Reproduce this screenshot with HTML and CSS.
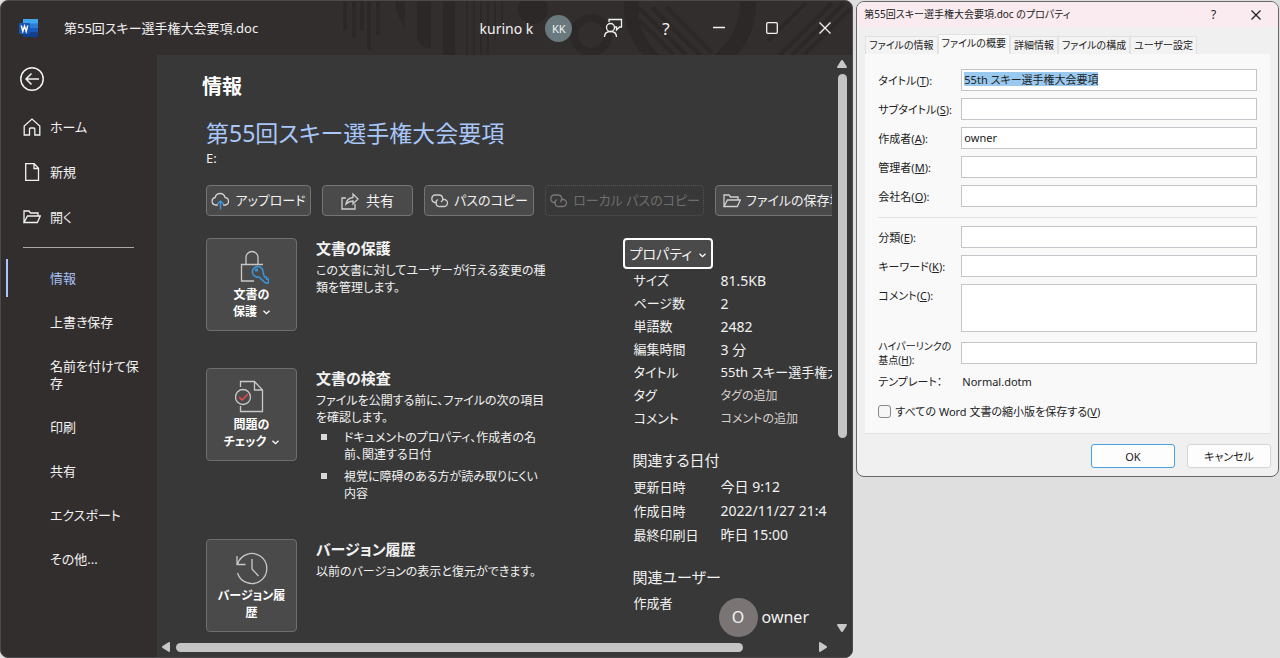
FILE: index.html
```html
<!DOCTYPE html>
<html lang="ja">
<head>
<meta charset="utf-8">
<title>第55回スキー選手権大会要項.doc</title>
<link rel="stylesheet" href="styles.css">
</head>
<body>
<div class="desktop">
  <div class="window">
    <header class="titlebar">
      <svg class="pattern" width="512" height="54" viewBox="340 0 512 54" aria-hidden="true">
        <g fill="#2c2828">
          <path d="M343 0h4v30h-4zM352 0h4v37h-4zM360 0h4v30h-4zM367 0h4v48h-4zM376 0h4v34h-4zM395 0h10v28q-8-12-10-28zM417 0h14v48q-14-4-14-10zM443 0h12v54h-12zM466 0h2v54h-2zM473 0h2v54h-2zM480 0h2v54h-2zM487 0h2v54h-2zM494 0h2v40h-2zM501 0h2v30h-2z"/>
          <circle cx="533" cy="8" r="15"/>
          <path d="M624 0h14q-2 34 22 54h-16q-22-22-20-54zM740 0h16q0 34-20 54h-22q26-20 26-54z"/>
        </g>
        <g fill="none" stroke="#2c2828">
          <circle cx="591" cy="34" r="17" stroke-width="8"/>
          <path stroke-width="4" d="M638 6l48 48M640 20l34 34M652 6l48 48M666 6l46 46M780 54l52-52M792 54l52-52M804 54l46-46M768 40l38-38"/>
        </g>
      </svg>
      <svg class="word-logo" width="19" height="18" viewBox="0 0 19 18" role="img" aria-label="Word">
        <rect x="4" width="15" height="5" fill="#41a5ee"/><rect x="4" y="4.500" width="15" height="4.500" fill="#2b7cd3"/><rect x="4" y="9" width="15" height="4.500" fill="#185abd"/><rect x="4" y="13.500" width="15" height="4.500" fill="#103f91"/>
        <rect y="4" width="11" height="11" rx="1" fill="#1955b4"/>
        <path d="M2.300 6.500l1.500 6L5.500 7l1.700 5.500 1.500-6" fill="none" stroke="#fff" stroke-width="1.400"/>
      </svg>
      <span class="file-name">第55回スキー選手権大会要項.doc</span>
      <span class="user-name">kurino k</span>
      <span class="user-avatar">KK</span>
      <div class="window-buttons">
        <button aria-label="フィードバック"><svg width="20" height="20" viewBox="0 0 20 20"><circle cx="7.500" cy="9.500" r="4"/><path d="M1.500 19q0-5.500 6-5.500t6 5.500M6 4V1.500h12.500V9H16.500l-3 3V9H12"/></svg></button>
        <button aria-label="ヘルプ" class="help">?</button>
        <button aria-label="最小化"><svg width="12" height="12" viewBox="0 0 12 12"><path d="M0 5.500h12"/></svg></button>
        <button aria-label="最大化"><svg width="12" height="12" viewBox="0 0 12 12"><rect x=".7" y=".7" width="10.600" height="10.600" rx="1"/></svg></button>
        <button aria-label="閉じる"><svg width="12" height="12" viewBox="0 0 12 12"><path d="M.5.5l11 11M11.500.5l-11 11"/></svg></button>
      </div>
    </header>

    <nav class="sidebar">
      <button class="back" aria-label="戻る"><svg width="24" height="24" viewBox="0 0 24 24"><circle cx="12" cy="12" r="11.200"/><path d="M19 12H6.500M11.500 6.500L6 12l5.500 5.500"/></svg></button>
      <a class="nav-item" href="#"><svg width="18" height="18" viewBox="0 0 18 18"><path d="M1.200 17V8L9 1l7.800 7v9h-5v-6q0-1-1-1H7.500q-1 0-1 1v6z"/></svg><span>ホーム</span></a>
      <a class="nav-item" href="#"><svg width="18" height="18" viewBox="0 0 18 18"><path d="M2.700.7h8.500l4.300 4.500v12.100H2.700zM11 .7v4.800h4.500"/></svg><span>新規</span></a>
      <a class="nav-item" href="#"><svg width="18" height="18" viewBox="0 0 18 18"><path d="M1 14.500V3h5l1.500 2H15v3M1 14.500L4.500 8H17.300l-3 6.500z"/></svg><span>開く</span></a>
      <hr>
      <a class="nav-item current" href="#"><span>情報</span></a>
      <a class="nav-item" href="#"><span>上書き保存</span></a>
      <a class="nav-item" href="#"><span>名前を付けて保<br>存</span></a>
      <a class="nav-item" href="#"><span>印刷</span></a>
      <a class="nav-item" href="#"><span>共有</span></a>
      <a class="nav-item" href="#"><span>エクスポート</span></a>
      <a class="nav-item" href="#"><span>その他...</span></a>
    </nav>

    <main class="pane">
      <h1>情報</h1>
      <div class="pane-body">
        <h2 class="doc-title">第55回スキー選手権大会要項</h2>
        <p class="doc-path">E:</p>
        <div class="actions">
          <button class="w-upload"><svg width="19" height="18" viewBox="0 0 19 18"><path d="M7 13H4.500a3.800 3.800 0 0 1-.3-7.500 5 5 0 0 1 9.800 0 3.800 3.800 0 0 1 .5 7.500H12"/><path class="blue" d="M9.500 17.500V9M6.500 12l3-3 3 3"/></svg>アップロード</button>
          <button class="w-share"><svg width="18" height="18" viewBox="0 0 18 18"><path d="M5 6H1v11h13v-5M5 12q1-6 7-6.500V2l5 5-5 5V9q-4 0-7 3z"/></svg>共有</button>
          <button class="w-path"><svg width="19" height="18" viewBox="0 0 19 18"><path d="M7 10.500H5a3.800 3.800 0 0 1 0-7.500h4a3.800 3.800 0 0 1 2 7M12 7.500h2a3.300 3.300 0 0 1 0 7h-4a3.700 3.700 0 0 1-2-7"/></svg>パスのコピー</button>
          <button class="w-local" disabled><svg width="19" height="18" viewBox="0 0 19 18"><path d="M7 10.500H5a3.800 3.800 0 0 1 0-7.500h4a3.800 3.800 0 0 1 2 7M12 7.500h2a3.300 3.300 0 0 1 0 7h-4a3.700 3.700 0 0 1-2-7"/></svg>ローカル パスのコピー</button>
          <button class="w-folder"><svg width="18" height="18" viewBox="0 0 18 18"><path d="M1 14.500V3h5l1.500 2H15v3M1 14.500L4.500 8H17.300l-3 6.500z"/></svg>ファイルの保存場所を開く</button>
        </div>
        <div class="columns">
          <div class="sections">
            <section>
              <button class="tile"><svg width="34" height="34" viewBox="0 0 34 34"><path d="M28 14.500H6.500V31H19M11 14V7.500a6 6 0 0 1 12 0V14"/><path class="blue" d="M28 22.500a5.300 5.300 0 1 0-4 4.500l6.500 6h3v-4l-2 0v-2h-2z"/><circle class="blue" cx="21.500" cy="20" r="1"/></svg><span>文書の<br>保護 <svg class="chev" width="7" height="5" viewBox="0 0 7 5"><path d="M.5.7l3 3 3-3"/></svg></span></button>
              <div class="about"><h3>文書の保護</h3><p>この文書に対してユーザーが行える変更の種<br>類を管理します。</p></div>
            </section>
            <section>
              <button class="tile"><svg width="34" height="34" viewBox="0 0 34 34"><path d="M5.500 7V1.500h14l8 8.500v21.500h-22V26M19.500 1.500V10h8"/><circle cx="8" cy="17" r="7.500"/><path class="red" d="M4 17l3 3 6-6"/></svg><span>問題の<br>チェック <svg class="chev" width="7" height="5" viewBox="0 0 7 5"><path d="M.5.7l3 3 3-3"/></svg></span></button>
              <div class="about"><h3>文書の検査</h3><p>ファイルを公開する前に、ファイルの次の項目<br>を確認します。</p>
                <ul><li>ドキュメントのプロパティ、作成者の名<br>前、関連する日付</li><li>視覚に障碍のある方が読み取りにくい<br>内容</li></ul></div>
            </section>
            <section>
              <button class="tile"><svg width="34" height="34" viewBox="0 0 34 34"><path d="M2 5v8.500h8.500M2.500 13a15 15 0 1 1 0 9M17 8v10l6.500 7"/></svg><span>バージョン履<br>歴</span></button>
              <div class="about"><h3>バージョン履歴</h3><p>以前のバージョンの表示と復元ができます。</p></div>
            </section>
          </div>
          <aside class="details">
            <button class="prop-button">プロパティ <svg class="chev" width="7" height="5" viewBox="0 0 7 5"><path d="M.5.7l3 3 3-3"/></svg></button>
            <dl>
              <dt>サイズ</dt><dd>81.5KB</dd>
              <dt>ページ数</dt><dd>2</dd>
              <dt>単語数</dt><dd>2482</dd>
              <dt>編集時間</dt><dd>3 分</dd>
              <dt>タイトル</dt><dd class="text">55th スキー選手権大会要項</dd>
              <dt>タグ</dt><dd class="dim">タグの追加</dd>
              <dt>コメント</dt><dd class="dim">コメントの追加</dd>
            </dl>
            <h4>関連する日付</h4>
            <dl class="dates">
              <dt>更新日時</dt><dd>今日 9:12</dd>
              <dt>作成日時</dt><dd>2022/11/27 21:4</dd>
              <dt>最終印刷日</dt><dd>昨日 15:00</dd>
            </dl>
            <h4>関連ユーザー</h4>
            <dl class="people">
              <dt>作成者</dt><dd><span class="owner-avatar">O</span>owner</dd>
            </dl>
          </aside>
        </div>
      </div>
    </main>
    <div class="vscroll" aria-hidden="true">
      <svg width="10" height="8" viewBox="0 0 10 8"><path d="M5 0q.8 0 1.300 1L10 7q0 1-1 1H1Q0 8 0 7l3.700-6Q4.200 0 5 0z"/></svg>
      <div class="vtrack"><div class="vthumb"></div></div>
      <svg width="10" height="8" viewBox="0 0 10 8"><path d="M5 8q.8 0 1.300-1L10 1q0-1-1-1H1Q0 0 0 1l3.700 6Q4.200 8 5 8z"/></svg>
    </div>
    <div class="hscroll" aria-hidden="true">
      <svg width="8" height="10" viewBox="0 0 8 10"><path d="M0 5q0-.8 1-1.300L7 0q1 0 1 1v8q0 1-1 1L1 6.300Q0 5.800 0 5z"/></svg>
      <div class="htrack"><div class="hthumb"></div></div>
      <svg width="8" height="10" viewBox="0 0 8 10"><path d="M8 5q0-.8-1-1.300L1 0Q0 0 0 1v8q0 1 1 1l6-3.700Q8 5.800 8 5z"/></svg>
    </div>
  </div>

  <div class="side">
    <form class="dialog">
      <header class="dialog-title">
        <span>第55回スキー選手権大会要項.doc のプロパティ</span>
        <button type="button" aria-label="ヘルプ">?</button>
        <button type="button" aria-label="閉じる"><svg width="10" height="10" viewBox="0 0 10 10"><path d="M.5.5l9 9M9.500.5l-9 9"/></svg></button>
      </header>
      <div class="tabs">
        <button type="button">ファイルの情報</button><button type="button" class="active">ファイルの概要</button><button type="button">詳細情報</button><button type="button">ファイルの構成</button><button type="button">ユーザー設定</button>
      </div>
      <div class="tab-panel">
        <div class="fields">
          <label for="f1">タイトル(<u>T</u>):</label><input id="f1" class="selected" value="55th スキー選手権大会要項">
          <label for="f2">サブタイトル(<u>S</u>):</label><input id="f2">
          <label for="f3">作成者(<u>A</u>):</label><input id="f3" value="owner">
          <label for="f4">管理者(<u>M</u>):</label><input id="f4">
          <label for="f5">会社名(<u>O</u>):</label><input id="f5">
        </div>
        <hr>
        <div class="fields">
          <label for="f6">分類(<u>E</u>):</label><input id="f6">
          <label for="f7">キーワード(<u>K</u>):</label><input id="f7">
          <label for="f8" class="top">コメント(<u>C</u>):</label><textarea id="f8"></textarea>
          <label for="f9" class="two-line">ハイパーリンクの<br>基点(<u>H</u>):</label><input id="f9">
        </div>
        <div class="template"><span>テンプレート：</span><span>Normal.dotm</span></div>
        <label class="check"><input type="checkbox"><span>すべての Word 文書の縮小版を保存する(<u>V</u>)</span></label>
      </div>
      <div class="dialog-actions">
        <button type="button" class="primary">OK</button>
        <button type="button">キャンセル</button>
      </div>
    </form>
  </div>
</div>
</body>
</html>
```
FILE: styles.css
```css
* { box-sizing: border-box; }
body {
  margin: 0;
  font: 13px/17px "Noto Sans", "Noto Sans CJK JP", sans-serif;
  font-feature-settings: "palt";
  color: #f2f2f2;
  background: #dfdfdf;
}
h1, h2, h3, h4, p, ul, dl, dd { margin: 0; padding: 0; }
button, input, textarea { font: inherit; font-feature-settings: inherit; color: inherit; }
button { padding: 0; border: 0; background: none; }
svg { flex: none; fill: none; stroke: currentColor; stroke-width: 1.300; }
.blue { stroke: #3a96dd; stroke-width: 1.500; }
.red { stroke: #e8484d; stroke-width: 1.600; }

.desktop { display: grid; grid-template: 100vh / 2fr 1fr; }

/* Word window */
.window {
  display: grid;
  grid-template: 54px minmax(0, 1fr) 20px / 156px minmax(0, 1fr) 20px;
  border: 1px solid #4c4a4a;
  border-radius: 8px;
  background: #322e2e;
  overflow: hidden;
}
.titlebar {
  grid-column: 1 / -1;
  position: relative;
  display: flex;
  align-items: center;
  padding: 0 1px 0 18px;
}
.pattern { position: absolute; top: 0; right: 0; stroke: none; }
.titlebar > :not(.pattern) { position: relative; }
.word-logo { stroke: none; }
.file-name { margin-left: 26px; margin-right: auto; }
.user-name { font-size: 14px; }
.user-avatar {
  display: grid; place-items: center;
  width: 27px; height: 27px; margin-left: 12px;
  border-radius: 50%; background: #69797e; font-size: 11px;
}
.window-buttons { display: flex; margin-left: 14px; }
.window-buttons button { display: grid; place-items: center; width: 53px; height: 32px; }
.window-buttons .help { font-size: 17px; }

.sidebar { grid-row: 2 / 4; padding-top: 12px; display: flex; flex-direction: column; }
.back { align-self: flex-start; margin: 0 0 14px 19px; height: 24px; }
.back svg { display: block; stroke-width: 1.500; }
.nav-item {
  display: flex; align-items: center; gap: 9px;
  min-height: 44px; padding: 13px 0 14px 22px;
  color: #f2f2f2; text-decoration: none;
}
.sidebar hr { width: 111px; margin: 7px 0 8px 22px; border: 0; border-top: 1px solid #a8a6a6; }
hr ~ .nav-item { padding-left: 49px; }
hr ~ .current { padding-left: 5px; gap: 42px; color: #a9c1f5; }
.current::before { content: ""; width: 2px; height: 38px; margin: -10px 0; background: #a9c7fa; }

.pane { padding: 20px 0 0 45px; overflow: hidden; background: #383838; white-space: nowrap; }
.pane h1 { font-size: 20px; line-height: 24px; color: #fff; }
.pane-body { padding: 18px 0 0 4px; }
.doc-title { font-size: 23px; line-height: 32px; font-weight: 400; color: #a9c7fa; }
.doc-path { padding-top: 1px; }
.actions { display: flex; gap: 11px; margin: 18px 0 22px; }
.actions button {
  display: flex; flex: none; align-items: center; justify-content: center; gap: 5px;
  height: 31px;
  border: 1px solid #757575; border-radius: 4px; background: #4a4a4a;
}
.actions svg { color: #d0d0d0; }
.actions button:disabled { color: #6e6e6e; border: 1px dotted #555; background: none; }
.actions button:disabled svg { color: #777; }
.actions .w-upload { width: 105px; }
.actions .w-share { width: 91px; gap: 7px; font-size: 14px; }
.actions .w-path { width: 110px; }
.actions .w-local { width: 159px; }
.actions .w-folder { padding: 0 7px; }

.columns { display: grid; grid-template-columns: 2fr minmax(0, 1fr); }
.sections { display: flex; flex-direction: column; gap: 37px; }
section { display: flex; gap: 19px; }
.tile {
  display: flex; flex-direction: column; align-items: center; justify-content: center; gap: 2px;
  flex: none; align-self: flex-start;
  width: 91px; height: 93px;
  border: 1px solid #6e6e6e; border-radius: 4px; background: #4a4a4a;
  font-size: 12px; font-weight: 700; color: #fff;
}
.tile > svg { color: #c8c8c8; }
.chev { margin-left: 3px; stroke: #fff; vertical-align: middle; }
.about { font-size: 12px; }
.about h3 { margin-bottom: 3px; font-size: 15px; line-height: 21px; }
.about ul { display: grid; gap: 5px; margin-top: 3px; padding-left: 28px; list-style: none; }
.about li::before {
  content: ""; float: left; width: 6px; height: 6px; margin: 5px 0 0 -23px; background: #d8d8d8;
}

.prop-button {
  width: 90px; height: 31px; font-size: 14px;
  border: 2px solid #fff; border-radius: 4px; background: #4a4a4a;
}
.details { margin-left: -1px; }
.details dl { display: grid; grid-template-columns: 87px 1fr; padding-left: 11px; line-height: 23px; }
.details dd { font-size: 14px; }
.details .text { font-size: 13px; }
.details .dim { font-size: 12px; color: #d4cfcb; }
.details h4 { padding: 18px 0 3px 10px; font-size: 15px; font-weight: 400; line-height: 24px; }
.details .dates { line-height: 24px; }
.details .people dd { display: flex; align-items: center; gap: 4px; padding-top: 6px; margin-left: -2px; font-size: 16px; }
.owner-avatar {
  display: grid; place-items: center; width: 39px; height: 39px;
  border-radius: 50%; background: #7a7574;
}

.vscroll, .hscroll { display: flex; align-items: center; background: #383838; }
.vscroll { flex-direction: column; }
.vscroll svg, .hscroll svg { fill: #c8c8c8; stroke: none; }
.vscroll { padding: 5px 0 5px; gap: 6px; }
.vtrack { flex: 1; }
.vthumb { width: 9px; height: 67%; border-radius: 5px; background: #c4c4c4; }
.hscroll { grid-column: 2 / 4; padding: 0 25px 0 5px; gap: 6px; }
.htrack { flex: 1; }
.hthumb { width: 89%; height: 9px; border-radius: 5px; background: #c4c4c4; }

/* Properties dialog */
.side { padding: 1px 1px 0 3px; color: #222; font-size: 11px; line-height: 15px; }
.dialog {
  border: 1px solid #666; border-radius: 8px; background: #f0f0f0; overflow: hidden; white-space: nowrap;
}
.dialog-title { display: flex; align-items: center; height: 25px; padding-left: 7px; background: #f9ebef; font-size: 10px; }
.dialog-title span { flex: 1; }
.dialog-title button { width: 43px; height: 25px; display: grid; place-items: center; font-size: 12px; }
.tabs { display: flex; align-items: flex-end; height: 27px; padding: 0 8px; font-size: 10px; }
.tabs button { height: 18px; padding: 0 3px; border: 1px solid #e2e2e2; border-bottom: 0; background: #f3f3f3; }
.tabs .active { height: 20px; background: #f9f9f9; padding-bottom: 2px; }
.tab-panel { margin: 0 8px; padding: 15px 13px 14px; background: #f9f9f9; border-bottom: 1px solid #e2e2e2; }
.fields { display: grid; grid-template-columns: 83px 1fr; gap: 7px 0; align-items: center; }
.fields input, .fields textarea {
  display: block; width: 100%; height: 22px; padding: 0 2px 2px;
  border: 1px solid #c3c5cb; border-radius: 0; background-color: #fff; resize: none;
}
.fields textarea { height: 48px; }
.fields .selected {
  background-image: linear-gradient(#99c9ef, #99c9ef);
  background-repeat: no-repeat; background-position: 2px 2px; background-size: 134px 14px;
}
.fields .top { align-self: start; padding-top: 4px; }
.fields .two-line { font-size: 10px; line-height: 14px; }
.tab-panel hr { margin: 10px 0 8px; border: 0; border-top: 1px solid #e2e2e2; }
.template { display: grid; grid-template-columns: 84px 1fr; margin-top: 7px; }
.check { display: flex; align-items: center; gap: 4px; margin-top: 15px; }
.check input { appearance: none; width: 13px; height: 13px; margin: 0; border: 1px solid #888; border-radius: 3px; background: #f6f6f6; }
.dialog-actions { display: flex; justify-content: flex-end; gap: 12px; padding: 10px 7px 8px; }
.dialog-actions button { width: 84px; height: 24px; border: 1px solid #d6d6d6; border-radius: 3px; background: #fdfdfd; }
.dialog-actions .primary { border-color: #4aa0e0; }
```
